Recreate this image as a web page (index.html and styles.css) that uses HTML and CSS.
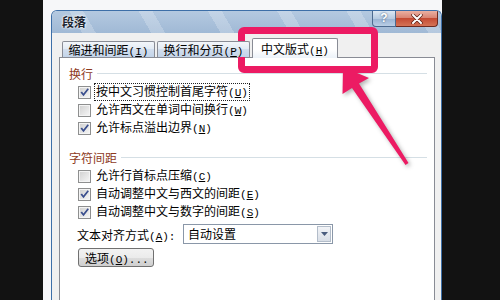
FILE: index.html
```html
<!DOCTYPE html>
<html lang="zh-CN">
<head>
  <meta charset="UTF-8" />
  <title>段落</title>
  <link rel="stylesheet" href="styles.css">
</head>
<body>
  <div class="stage">
    <div class="bar-left"></div>

    <div class="screen">
      <!-- Paragraph dialog -->
      <div class="dialog">
        <div class="titlebar">
          <span class="title">段落</span>
          <div class="caption-btns">
            <span class="help-btn">?</span>
            <span class="close-btn">
              <svg width="14" height="10" viewBox="0 0 14 10">
                <path d="M3 1 L11 9 M11 1 L3 9" stroke="#5a1e14" stroke-width="3.4" stroke-linecap="round"/>
                <path d="M3 1 L11 9 M11 1 L3 9" stroke="#fff" stroke-width="2" stroke-linecap="round"/>
              </svg>
            </span>
          </div>
        </div>

        <div class="client">
          <div class="tabs">
            <div class="tab">缩进和间距<span class="k">(<u>I</u>)</span></div>
            <div class="tab">换行和分页<span class="k">(<u>P</u>)</span></div>
            <div class="tab active">中文版式<span class="k">(<u>H</u>)</span></div>
          </div>

          <div class="panel">
            <div class="group-title">换行</div>
            <div class="check"><span class="cb on"></span><span class="lbl focus">按中文习惯控制首尾字符<span class="k">(<u>U</u>)</span></span></div>
            <div class="check"><span class="cb"></span><span class="lbl">允许西文在单词中间换行<span class="k">(<u>W</u>)</span></span></div>
            <div class="check"><span class="cb on"></span><span class="lbl">允许标点溢出边界<span class="k">(<u>N</u>)</span></span></div>

            <div class="group-title second">字符间距</div>
            <div class="check"><span class="cb"></span><span class="lbl">允许行首标点压缩<span class="k">(<u>C</u>)</span></span></div>
            <div class="check"><span class="cb on"></span><span class="lbl">自动调整中文与西文的间距<span class="k">(<u>E</u>)</span></span></div>
            <div class="check"><span class="cb on"></span><span class="lbl">自动调整中文与数字的间距<span class="k">(<u>S</u>)</span></span></div>

            <div class="align-row">
              <span class="align-label">文本对齐方式<span class="k">(<u>A</u>):</span></span>
              <div class="combo">
                <span class="combo-text">自动设置</span>
                <span class="combo-drop"></span>
              </div>
            </div>

            <div class="opt-btn">选项<span class="k">(<u>O</u>)...</span></div>
          </div>
        </div>
      </div>
    </div>

    <div class="bar-right"></div>

    <!-- Annotation on top of the screenshot -->
    <svg class="arrow" width="500" height="300" viewBox="0 0 500 300">
      <polygon points="343,67 369,78 359,83.5 408.5,163 405.5,165 352,88 342.5,94" fill="#ec1b63"/>
    </svg>
    <div class="mark"></div>
  </div>
</body>
</html>
```

FILE: styles.css
```css
/* Page */
body {
  margin: 0;
  background: #121212;
  font-family: "Noto Sans CJK SC", sans-serif;
  font-size: 12px;
  color: #000;
}
.stage {
  position: relative;
  width: 500px;
  height: 300px;
  display: flex;
  overflow: hidden;
}
.bar-left {
  width: 43px;
  background: #121212;
}
.bar-right {
  flex: 1;
  background: #121212;
}
.screen {
  width: 399px;
  height: 300px;
  box-sizing: border-box;
  padding: 10px 0 0 8px;
  background: #f6f7f9;
  overflow: hidden;
}

/* Dialog frame */
.dialog {
  width: 391px;
  height: 300px;
  box-sizing: border-box;
  border: 1px solid #3d6fa8;
  border-bottom: none;
  border-radius: 6px 6px 0 0;
  background: #f0f0f0;
  display: flex;
  flex-direction: column;
  overflow: hidden;
}
.titlebar {
  height: 22px;
  display: flex;
  justify-content: space-between;
  align-items: flex-start;
  padding-left: 10px;
  background:
    repeating-linear-gradient(60deg, rgba(255,255,255,0) 0 26px, rgba(255,255,255,0.22) 26px 38px, rgba(255,255,255,0) 38px 60px),
    linear-gradient(#b4c9e0, #a0b9d5);
}
.title {
  line-height: 22px;
  font-weight: bold;
  color: #1b2430;
  text-shadow: 0 0 3px #fff, 0 0 2px #fff;
}
.caption-btns {
  display: flex;
  margin-right: 3px;
}
.help-btn {
  width: 24px;
  height: 16px;
  box-sizing: border-box;
  border: 1px solid #4c6a8f;
  border-top: none;
  border-radius: 0 0 0 4px;
  background: linear-gradient(#dce7f3, #b6cbe2 50%, #98b3d3 51%, #b9cee5);
  color: #fff;
  font-family: "Liberation Sans", sans-serif;
  font-weight: bold;
  font-size: 12px;
  line-height: 15px;
  text-align center;
  text-align: center;
  text-shadow: 0 0 2px #2d4667;
}
.close-btn {
  width: 42px;
  height: 16px;
  box-sizing: border-box;
  border: 1px solid #6d2a20;
  border-top: none;
  border-left: none;
  border-radius: 0 0 4px 0;
  background: linear-gradient(#eab0a2, #d98574 45%, #c44b34 50%, #d57356);
  display: flex;
  align-items: center;
  justify-content: center;
}

/* Client area and tabs */
.client {
  flex: 1;
  display: flex;
  flex-direction: column;
  padding: 5px 6px 0 7px;
}
.tabs {
  position: relative;
  z-index: 1;
  height: 20px;
  display: flex;
  align-items: flex-end;
  padding-left: 3px;
}
.tab {
  width: 93px;
  height: 16px;
  margin-bottom: 1px;
  margin-right: 2px;
  box-sizing: border-box;
  border: 1px solid #898c95;
  border-bottom: none;
  border-radius: 2px 2px 0 0;
  background: linear-gradient(#f3f6fa, #e3ebf4 45%, #d2deee 50%, #c3d4e9);
  line-height: 15px;
  text-align: center;
  white-space: nowrap;
}
.tab.active {
  width: 86px;
  height: 20px;
  margin-bottom: 0;
  padding-top: 2px;
  line-height: 16px;
  background: linear-gradient(#fff, #fff 55%, #ecf2f9);
}
.k {
  font-family: "Liberation Mono", monospace;
  font-size: 11px;
}

/* Panel */
.panel {
  flex: 1;
  margin-top: -1px;
  padding: 0 7px 0 9px;
  background: #fff;
  border: 1px solid #898c95;
  border-bottom: none;
}
.group-title {
  height: 16px;
  margin-top: 7px;
  display: flex;
  align-items: center;
  color: #8e3a1d;
}
.group-title::after {
  content: "";
  flex: 1;
  height: 1px;
  margin-left: 4px;
  background: #d5dfe5;
}
.group-title.second {
  margin-top: 12px;
}
.group-title + .check {
  margin-top: 2px;
}
.check {
  height: 18px;
  margin-left: 9px;
  display: flex;
  align-items: center;
}
.cb {
  width: 13px;
  height: 13px;
  box-sizing: border-box;
  border: 1px solid #8e8f8f;
  box-shadow: inset 0 0 0 1px #f4f4f4;
  background: linear-gradient(135deg, #cfcfcf, #f7f7f7);
}
.cb.on {
  background:
    url("data:image/svg+xml;utf8,<svg xmlns='http://www.w3.org/2000/svg' width='11' height='11'><polygon points='1.5,5.6 3,4.6 4.4,6.4 8.6,1.2 9.9,2.3 4.5,9.2' fill='%233b4f8e'/></svg>") center no-repeat,
    linear-gradient(135deg, #cfcfcf, #f7f7f7);
}
.lbl {
  margin-left: 3px;
  padding: 0 1px;
  line-height: 14px;
  border: 1px dotted transparent;
  white-space: nowrap;
}
.lbl.focus {
  border-color: #222;
}

/* Text alignment combo and options button */
.align-row {
  height: 20px;
  margin: 3px 0 0 8px;
  display: flex;
  align-items: center;
}
.align-label {
  width: 106px;
  white-space: nowrap;
}
.combo {
  width: 150px;
  height: 20px;
  box-sizing: border-box;
  border: 1px solid #8a97a8;
  display: flex;
  background: #fff;
}
.combo-text {
  flex: 1;
  padding-left: 4px;
  line-height: 18px;
}
.combo-drop {
  width: 14px;
  margin: 1px;
  box-sizing: border-box;
  border: 1px solid #b3bdca;
  background:
    url("data:image/svg+xml;utf8,<svg xmlns='http://www.w3.org/2000/svg' width='7' height='4'><polygon points='0,0 7,0 3.5,4' fill='%234a5d7e'/></svg>") center no-repeat,
    linear-gradient(#f2f4f7, #d9dfe7);
}
.opt-btn {
  width: 76px;
  height: 19px;
  margin: 4px 0 0 9px;
  box-sizing: border-box;
  padding-left: 6px;
  border: 1px solid #707070;
  border-radius: 3px;
  background: linear-gradient(#f2f2f2, #ebebeb 50%, #dddddd 51%, #cfcfcf);
  line-height: 17px;
  white-space: nowrap;
}

/* Pink annotation */
.arrow {
  position: absolute;
  left: 0;
  top: 0;
  filter: drop-shadow(2px 2px 2px rgba(0, 0, 0, 0.3));
}
.mark {
  position: absolute;
  left: 238px;
  top: 27px;
  width: 140px;
  height: 46px;
  box-sizing: border-box;
  border: 7px solid #ec1b63;
  border-radius: 6px;
}
```
